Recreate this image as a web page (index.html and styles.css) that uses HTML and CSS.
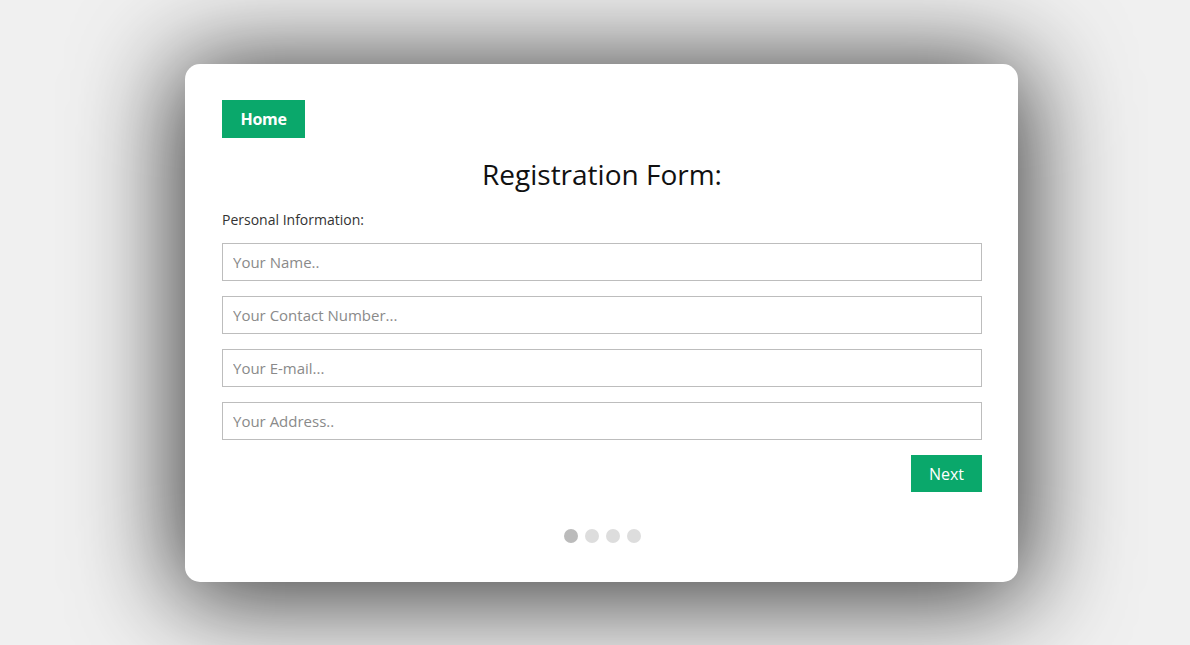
FILE: index.html
```html
<!DOCTYPE html>
<html>
<head>
<meta charset="utf-8">
<link rel="stylesheet" href="styles.css">
</head>
<body>
<div class="card">
  <a class="home" href="#">Home</a>
  <h1 class="title">Registration Form:</h1>
  <p class="section">Personal Information:</p>
  <form class="form">
    <input class="field" type="text" placeholder="Your Name..">
    <input class="field" type="text" placeholder="Your Contact Number...">
    <input class="field" type="text" placeholder="Your E-mail...">
    <input class="field" type="text" placeholder="Your Address..">
    <div class="actions"><button class="next" type="button">Next</button></div>
  </form>
  <div class="dots">
    <span class="dot active"></span>
    <span class="dot"></span>
    <span class="dot"></span>
    <span class="dot"></span>
  </div>
</div>
</body>
</html>
```

FILE: styles.css
```css
html, body {
  margin: 0;
  padding: 0;
  background: #f0f0f0;
  font-family: "Open Sans", "Liberation Sans", sans-serif;
}
body {
  padding: 64px 0 0 185px;
  height: 645px;
  box-sizing: border-box;
  overflow: hidden;
}
.card {
  width: 833px;
  height: 518px;
  box-sizing: border-box;
  background: #fff;
  border-radius: 15px;
  padding: 36px 36px 0 37px;
  box-shadow: 0 8px 100px 10px rgba(0, 0, 0, 0.75);
}
.home {
  display: inline-block;
  width: 83px;
  height: 38px;
  line-height: 38px;
  text-align: center;
  background: #0aa86b;
  color: #fff;
  font-weight: 700;
  font-size: 16px;
  text-decoration: none;
  letter-spacing: -0.3px;
}
.title {
  margin: 17px 0 0;
  text-align: center;
  font-weight: 400;
  font-size: 28px;
  line-height: 38px;
  color: #111;
}
.section {
  margin: 17px 0 0;
  font-size: 14px;
  line-height: 20px;
  color: #333;
}
.form {
  display: flex;
  flex-direction: column;
  gap: 15px;
  margin-top: 13px;
}
.field {
  width: 760px;
  height: 38px;
  box-sizing: border-box;
  border: 1px solid #bdbdbd;
  padding: 0 10px;
  font-family: inherit;
  font-size: 15px;
  color: #333;
  outline: none;
}
.field::placeholder {
  color: #8a8a8a;
}
.actions {
  display: flex;
  justify-content: flex-end;
  width: 760px;
}
.next {
  width: 71px;
  height: 37px;
  border: none;
  background: #0aa86b;
  color: #fff;
  font-family: inherit;
  font-size: 16px;
  padding: 0;
}
.dots {
  display: flex;
  justify-content: center;
  gap: 7px;
  margin-top: 37px;
  width: 760px;
}
.dot {
  width: 14px;
  height: 14px;
  border-radius: 50%;
  background: #dddddd;
}
.dot.active {
  background: #bbbbbb;
}
```
